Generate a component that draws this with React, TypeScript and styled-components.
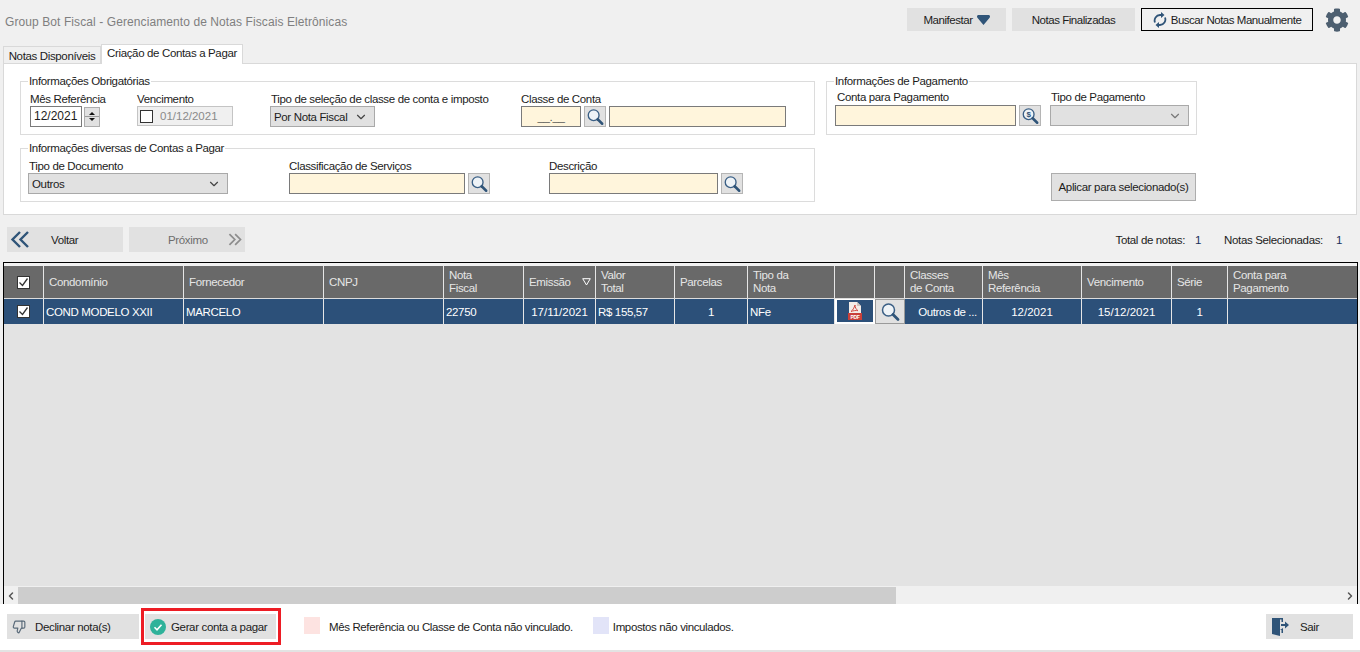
import styled, { createGlobalStyle } from "styled-components";
import { ChevronDown, ChevronLeft, ChevronRight, ThumbsDown } from "lucide-react";
import { FaCog } from "react-icons/fa";

const GlobalStyle = createGlobalStyle`
  html, body {
    margin: 0;
    padding: 0;
    background: #f0f0f0;
    overflow: hidden;
  }
  * {
    box-sizing: border-box;
  }
`;

const Page = styled.div`
  width: 1360px;
  height: 652px;
  display: flex;
  flex-direction: column;
  background: #f0f0f0;
  font-family: "Liberation Sans", Arial, sans-serif;
  font-size: 11.5px;
  letter-spacing: -0.35px;
  color: #1c1c1c;

  button {
    letter-spacing: inherit;
    white-space: nowrap;
  }
`;

const TopBar = styled.header`
  height: 44px;
  padding: 8px 11px 0 5px;
  display: flex;
  align-items: flex-start;
  gap: 6px;
`;

const AppTitle = styled.h1`
  margin: 0 auto 0 0;
  padding-top: 7px;
  font-size: 12px;
  font-weight: 400;
  letter-spacing: 0.09px;
  color: #7f7f7f;
`;

const TopButton = styled.button<{ $w: number; $focus?: boolean }>`
  width: ${(p) => p.$w}px;
  height: 23px;
  padding: 0;
  display: flex;
  align-items: center;
  justify-content: center;
  gap: 4px;
  background: ${(p) => (p.$focus ? "#f0f0f0" : "#e1e1e1")};
  border: ${(p) => (p.$focus ? "1px solid #000" : "none")};
  font: inherit;
  color: #1c1c1c;

  && {
    letter-spacing: -0.47px;
  }
`;

const GearWrap = styled.div`
  margin-left: 6px;
  height: 24px;
  color: #4d5f70;
`;

const TabStrip = styled.div`
  height: 20px;
  padding-left: 3px;
  display: flex;
  align-items: flex-end;
  position: relative;
  z-index: 1;
  margin-bottom: -1px;
`;

const Tab = styled.div<{ $active?: boolean }>`
  width: ${(p) => (p.$active ? 142 : 98)}px;
  height: ${(p) => (p.$active ? 20 : 18)}px;
  padding-top: ${(p) => (p.$active ? 2 : 3)}px;
  text-align: center;
  white-space: nowrap;
  background: ${(p) => (p.$active ? "#fff" : "#f0f0f0")};
  border: 1px solid #d9d9d9;
  border-bottom: ${(p) => (p.$active ? "none" : "1px solid #d9d9d9")};
`;

const Panel = styled.section`
  width: 1354px;
  height: 152px;
  margin-left: 3px;
  padding: 10px 0 0 16px;
  background: #fff;
  border: 1px solid #d9d9d9;
  display: grid;
  grid-template-columns: 795px 371px;
  grid-template-rows: 61px 61px;
  column-gap: 11px;
  row-gap: 6px;
`;

const Group = styled.fieldset<{ $compact?: boolean }>`
  margin: 0;
  min-width: 0;
  padding: ${(p) => (p.$compact ? 2 : 4)}px 0 0 8px;
  border: 1px solid #dcdcdc;
  display: flex;
  align-items: flex-start;

  label {
    height: ${(p) => (p.$compact ? 15 : 14)}px;
  }
`;

const GroupRow = styled.div`
  display: flex;
  align-items: flex-start;
`;

const Legend = styled.legend`
  margin-left: -1px;
  padding: 0 1px;
  line-height: 14px;
`;

const Field = styled.div<{ $w: number; $indent?: number }>`
  width: ${(p) => p.$w}px;
  margin-left: ${(p) => p.$indent ?? 0}px;
  display: flex;
  flex-direction: column;
`;

const Label = styled.label<{ $shift?: number }>`
  line-height: 14px;
  padding-left: ${(p) => p.$shift ?? 0}px;
  white-space: nowrap;
`;

const ControlRow = styled.div`
  display: flex;
  align-items: center;
  gap: 3px;
`;

const YellowInput = styled.div<{ $w: number }>`
  width: ${(p) => p.$w}px;
  height: 21px;
  background: #fff5dc;
  border: 1px solid #7a7a7a;
  text-align: center;
  line-height: 21px;
  color: #555;
`;

const DateText = styled.div`
  width: 52px;
  height: 21px;
  padding-left: 3px;
  line-height: 19px;
  font-size: 12px;
  letter-spacing: 0;
  color: #1c1c1c;
  background: #fff;
  border: 1px solid #7a7a7a;
`;

const Spinner = styled.div`
  width: 16px;
  height: 20px;
  margin-left: -1px;
  background: linear-gradient(#e1e1e1 8px, #9a9a9a 8px, #9a9a9a 9px, #e1e1e1 9px);
  border: 1px solid #adadad;
  display: flex;
  flex-direction: column;
  align-items: center;
  justify-content: center;
  gap: 3px;
  i {
    width: 0;
    height: 0;
    border-left: 3px solid transparent;
    border-right: 3px solid transparent;
  }
  i:first-child {
    border-bottom: 3px solid #111;
  }
  i:last-child {
    border-top: 3px solid #111;
  }
`;

const DisabledDate = styled.div`
  width: 96px;
  height: 20px;
  padding-left: 2px;
  display: flex;
  align-items: center;
  gap: 7px;
  letter-spacing: 0;
  background: #f0f0f0;
  border: 1px solid #c4c4c4;
  color: #8a8a8a;
`;

const CheckBox = styled.span`
  width: 13px;
  height: 13px;
  flex: none;
  background: #fff;
  border: 1px solid #333;
  display: inline-flex;
  align-items: center;
  justify-content: center;
`;

const Select = styled.div<{ $w: number; $empty?: boolean }>`
  width: ${(p) => p.$w}px;
  height: 21px;
  padding: 0 2px 0 3px;
  display: flex;
  align-items: center;
  justify-content: space-between;
  white-space: nowrap;
  background: #e1e1e1;
  border: 1px solid #a9a9a9;
  color: #1c1c1c;
  svg {
    color: ${(p) => (p.$empty ? "#777" : "#444")};
    margin-right: 4px;
  }
`;

const LookupButton = styled.button`
  width: 22px;
  height: 21px;
  padding: 0;
  display: flex;
  align-items: center;
  justify-content: center;
  background: #e1e1e1;
  border: 1px solid #b5b5b5;
`;

const ApplyCell = styled.div`
  display: flex;
  align-items: flex-end;
  justify-content: flex-end;
  padding: 0 1px 1px 0;
`;

const ApplyButton = styled.button`
  width: 145px;
  height: 28px;
  padding: 0;
  background: #e1e1e1;
  border: 1px solid #adadad;
  font: inherit;
  color: #1c1c1c;
`;

const NavRow = styled.div`
  height: 25px;
  margin-top: 12px;
  padding: 0 18px 0 7px;
  display: flex;
  align-items: center;
  gap: 6px;
`;

const NavButton = styled.button<{ $disabled?: boolean }>`
  width: 116px;
  height: 25px;
  padding: 0 3px;
  display: flex;
  align-items: center;
  background: #e1e1e1;
  border: none;
  font: inherit;
  color: ${(p) => (p.$disabled ? "#6d6d6d" : "#1c1c1c")};
`;

const NavLabel = styled.span<{ $left: number; $right?: number }>`
  margin-left: ${(p) => p.$left}px;
  margin-right: ${(p) => p.$right ?? 0}px;
`;

const Totals = styled.div`
  margin-left: auto;
  display: flex;
  gap: 23px;
`;

const TotalItem = styled.span<{ $gap: number }>`
  display: flex;
  gap: ${(p) => p.$gap}px;
  b {
    font-weight: 400;
    color: #17305c;
  }
`;

const GridFrame = styled.div`
  width: 1355px;
  height: 343px;
  margin: 10px 0 0 3px;
  padding-top: 3px;
  border: 1px solid #000;
  display: flex;
  flex-direction: column;
  background: #f0f0f0;
`;

const columns = "40px 140px 140px 120px 80px 72px 79px 73px 87px 40px 30px 78px 99px 90px 56px 127px";

const HeaderRow = styled.div`
  height: 33px;
  flex: none;
  display: grid;
  grid-template-columns: ${columns};
  background: #696969;
  border-bottom: 1px solid #dcdcdc;
`;

const HeaderCell = styled.div`
  padding-left: 5px;
  display: flex;
  align-items: center;
  justify-content: space-between;
  line-height: 13px;
  color: #e6e6e6;
  border-right: 1px solid #e6e6e6;
  white-space: pre-line;

  &:last-child {
    border-right: none;
  }
`;

const CheckCell = styled.div`
  display: flex;
  align-items: center;
  justify-content: center;
  border-right: 1px solid #e6e6e6;
`;

const FilterSlot = styled.span`
  margin-right: 4px;
  display: flex;
`;

const DataRow = styled.div`
  height: 25px;
  flex: none;
  display: grid;
  grid-template-columns: ${columns};
  background: #2c5079;
`;

const DataCell = styled.div<{ $center?: boolean; $wide?: boolean; $pad?: number }>`
  padding-left: ${(p) => p.$pad ?? (p.$center ? 0 : 2)}px;
  display: flex;
  align-items: center;
  justify-content: ${(p) => (p.$center ? "center" : "flex-start")};
  letter-spacing: ${(p) => (p.$wide ? "0" : "inherit")};
  color: #fff;
  border-right: 1px solid #e6e6e6;
  white-space: nowrap;

  &:last-child {
    border-right: none;
  }
`;

const PdfCell = styled.div`
  display: flex;
  align-items: center;
  justify-content: center;
  border: 2px solid #fff;
  border-top-width: 1px;
  background: #2c5079;
`;

const LensCell = styled.div`
  display: flex;
  align-items: center;
  justify-content: center;
  background: #e1e1e1;
  border: 1px solid #9a9a9a;
`;

const GridBody = styled.div`
  flex: 1;
  background: #e3e3e3;
`;

const ScrollBar = styled.div`
  height: 17px;
  flex: none;
  margin-top: 1px;
  display: flex;
  align-items: center;
  background: #f0f0f0;
  color: #555;
`;

const ScrollArrow = styled.div<{ $end?: boolean }>`
  width: 14px;
  margin-left: ${(p) => (p.$end ? "auto" : 0)};
  display: flex;
  justify-content: center;
`;

const ScrollThumb = styled.div`
  width: 878px;
  height: 17px;
  background: #cdcdcd;
`;

const Footer = styled.footer`
  flex: 1;
  margin-top: -1px;
  padding: 4px 7px 0 7px;
  height: 48px;
  display: flex;
  align-items: flex-start;
  background: #fff;
  border-bottom: 2px solid #e3e3e3;
`;

const FootButton = styled.button<{ $w: number; $gap: number }>`
  width: ${(p) => p.$w}px;
  height: 25px;
  padding: 0 0 0 5px;
  display: flex;
  align-items: center;
  gap: ${(p) => p.$gap}px;
  background: #e1e1e1;
  border: none;
  font: inherit;
  color: #1c1c1c;
`;

const Highlight = styled.div`
  margin: 0 0 0 2px;
  padding: 3px 2px 3px 1px;
  border: 3px solid #ed1c24;
`;

const DeclineSlot = styled.div`
  padding-top: 6px;
`;

const LegendSwatch = styled.span<{ $color: string }>`
  width: 16px;
  height: 17px;
  flex: none;
  background: ${(p) => p.$color};
`;

const LegendItem = styled.div<{ $left: number; $gap: number }>`
  margin-left: ${(p) => p.$left}px;
  margin-top: 9px;
  display: flex;
  align-items: center;
  gap: ${(p) => p.$gap}px;
`;

const LegendText = styled.span`
  margin-top: 2px;
  letter-spacing: -0.38px;
`;

const ExitSlot = styled.div`
  margin-left: auto;
  padding-top: 6px;
`;

const Lens = ({ size = 20, dollar = false }: { size?: number; dollar?: boolean }) => (
  <svg width={size} height={size} viewBox="0 0 20 20">
    <circle cx="8.5" cy="8" r="6" fill="#eef3f7" stroke="#3a5f85" strokeWidth="1.5" />
    {dollar && (
      <text x="8.5" y="11" fontSize="9" fontFamily="Liberation Sans" fontWeight="700" textAnchor="middle" fill="#2f5478">
        $
      </text>
    )}
    <path d="M13 12.5l5 5" stroke="#2f5478" strokeWidth="2.8" strokeLinecap="round" />
  </svg>
);

const Tick = () => (
  <svg width="11" height="11" viewBox="0 0 11 11">
    <path d="M1.5 5.5l3 3 5-7" fill="none" stroke="#333" strokeWidth="1.3" />
  </svg>
);

const SyncIcon = () => (
  <svg width="14" height="16" viewBox="0 0 14 16">
    <path d="M2 10.5A5.5 5.5 0 0 1 7 3h1.5M12 5.5A5.5 5.5 0 0 1 7 13H5.5" fill="none" stroke="#2f5478" strokeWidth="1.8" />
    <path d="M8 0l3.5 3L8 6zM6 10l-3.5 3L6 16z" fill="#2f5478" />
  </svg>
);

const PdfIcon = () => (
  <svg width="14" height="18" viewBox="0 0 14 18">
    <path d="M1 0h8l4 4v14H1z" fill="#f3ece8" />
    <path d="M9 0l4 4H9z" fill="#cfc4be" />
    <path d="M7 3c-1 3-2 5-4 6.500 2-.8 5-1.300 7-.8-2-1.200-3-3.500-3-5.700z" fill="none" stroke="#d24b43" strokeWidth="1" />
    <rect x="0" y="11" width="14" height="7" fill="#c9403a" />
    <text x="7" y="16.500" fontSize="5" fontFamily="Liberation Sans" fontWeight="700" textAnchor="middle" fill="#fff">
      PDF
    </text>
  </svg>
);

const OkIcon = () => (
  <svg width="16" height="16" viewBox="0 0 16 16">
    <circle cx="8" cy="8" r="8" fill="#2fb29a" />
    <path d="M4.500 8.300l2.500 2.500 4.500-5" fill="none" stroke="#fff" strokeWidth="1.600" />
  </svg>
);

const ExitIcon = () => (
  <svg width="18" height="20" viewBox="0 0 18 20">
    <path d="M1 1h8v18l-8-2z" fill="#2f5478" />
    <path d="M9 1h3v4h-1.500V2.500H9zM9 13h1.500v3H12v-5" fill="#2f5478" />
    <path d="M10 7h4V4.500L18 8l-4 3.500V9h-4z" fill="#2f5478" />
  </svg>
);

const DownTriangle = () => (
  <svg width="13" height="10" viewBox="0 0 13 10">
    <path d="M0 1.500C0 .5.800 0 1.500 0h10c.8 0 1.500.5 1.500 1.500 0 .5-.2 1-.6 1.400L6.500 10 .6 2.900C.2 2.500 0 2 0 1.500z" fill="#2f5478" />
  </svg>
);

const FilterMark = () => (
  <svg width="9" height="8" viewBox="0 0 9 8">
    <path d="M.7.7h7.600L4.500 7z" fill="none" stroke="#fff" strokeWidth="1" />
  </svg>
);

const DoubleChevron = ({ color, flip }: { color: string; flip?: boolean }) => (
  <svg width="20" height="17" viewBox="0 0 20 17">
    <path
      d={flip ? "M2 1l7.500 7.500L2 16M10 1l7.500 7.500L10 16" : "M18 1l-7.500 7.500L18 16M10 1L2.500 8.500 10 16"}
      fill="none"
      stroke={color}
      strokeWidth="2.4"
    />
  </svg>
);

const headers = [
  "Condomínio",
  "Fornecedor",
  "CNPJ",
  "Nota\nFiscal",
  "Emissão",
  "Valor\nTotal",
  "Parcelas",
  "Tipo da\nNota",
  "",
  "",
  "Classes\nde Conta",
  "Mês\nReferência",
  "Vencimento",
  "Série",
  "Conta para\nPagamento",
];

function App() {
  return (
    <Page>
      <GlobalStyle />
      <TopBar>
        <AppTitle>Group Bot Fiscal - Gerenciamento de Notas Fiscais Eletrônicas</AppTitle>
        <TopButton $w={99}>
          Manifestar <DownTriangle />
        </TopButton>
        <TopButton $w={123}>Notas Finalizadas</TopButton>
        <TopButton $w={172} $focus>
          <SyncIcon /> Buscar Notas Manualmente
        </TopButton>
        <GearWrap>
          <FaCog size={24} />
        </GearWrap>
      </TopBar>

      <TabStrip>
        <Tab>Notas Disponíveis</Tab>
        <Tab $active>Criação de Contas a Pagar</Tab>
      </TabStrip>

      <Panel>
        <Group>
          <Legend>Informações Obrigatórias</Legend>
          <GroupRow>
            <Field $w={107} $indent={1}>
              <Label>Mês Referência</Label>
              <ControlRow>
                <DateText>12/2021</DateText>
                <Spinner>
                  <i />
                  <i />
                </Spinner>
              </ControlRow>
            </Field>
            <Field $w={133}>
              <Label>Vencimento</Label>
              <DisabledDate>
                <CheckBox />
                01/12/2021
              </DisabledDate>
            </Field>
            <Field $w={251}>
              <Label $shift={1}>Tipo de seleção de classe de conta e imposto</Label>
              <Select $w={105}>
                Por Nota Fiscal <ChevronDown size={14} />
              </Select>
            </Field>
            <Field $w={265}>
              <Label>Classe de Conta</Label>
              <ControlRow>
                <YellowInput $w={60}>__.__</YellowInput>
                <LookupButton>
                  <Lens size={18} />
                </LookupButton>
                <YellowInput $w={177} />
              </ControlRow>
            </Field>
          </GroupRow>
        </Group>

        <Group $compact>
          <Legend>Informações de Pagamento</Legend>
          <GroupRow>
            <Field $w={215}>
              <Label $shift={2}>Conta para Pagamento</Label>
              <ControlRow>
                <YellowInput $w={181} />
                <LookupButton>
                  <Lens size={18} dollar />
                </LookupButton>
              </ControlRow>
            </Field>
            <Field $w={140}>
              <Label $shift={1}>Tipo de Pagamento</Label>
              <Select $w={139} $empty>
                <span />
                <ChevronDown size={14} />
              </Select>
            </Field>
          </GroupRow>
        </Group>

        <Group>
          <Legend>Informações diversas de Contas a Pagar</Legend>
          <GroupRow>
            <Field $w={261} $indent={-1}>
              <Label $shift={1}>Tipo de Documento</Label>
              <Select $w={200}>
                Outros <ChevronDown size={14} />
              </Select>
            </Field>
            <Field $w={260}>
              <Label>Classificação de Serviços</Label>
              <ControlRow>
                <YellowInput $w={176} />
                <LookupButton>
                  <Lens size={18} />
                </LookupButton>
              </ControlRow>
            </Field>
            <Field $w={200}>
              <Label>Descrição</Label>
              <ControlRow>
                <YellowInput $w={169} />
                <LookupButton>
                  <Lens size={18} />
                </LookupButton>
              </ControlRow>
            </Field>
          </GroupRow>
        </Group>

        <ApplyCell>
          <ApplyButton>Aplicar para selecionado(s)</ApplyButton>
        </ApplyCell>
      </Panel>

      <NavRow>
        <NavButton>
          <DoubleChevron color="#2f5478" />
          <NavLabel $left={21}>Voltar</NavLabel>
        </NavButton>
        <NavButton $disabled>
          <NavLabel $left={36} $right={20}>
            Próximo
          </NavLabel>
          <DoubleChevron color="#8c8c8c" flip />
        </NavButton>
        <Totals>
          <TotalItem $gap={10}>
            Total de notas: <b>1</b>
          </TotalItem>
          <TotalItem $gap={13}>
            Notas Selecionadas: <b>1</b>
          </TotalItem>
        </Totals>
      </NavRow>

      <GridFrame>
        <HeaderRow>
          <CheckCell>
            <CheckBox>
              <Tick />
            </CheckBox>
          </CheckCell>
          {headers.map((h, i) => (
            <HeaderCell key={i}>
              <span>{h}</span>
              {h === "Emissão" && (
                <FilterSlot>
                  <FilterMark />
                </FilterSlot>
              )}
            </HeaderCell>
          ))}
        </HeaderRow>
        <DataRow>
          <CheckCell>
            <CheckBox>
              <Tick />
            </CheckBox>
          </CheckCell>
          <DataCell>COND MODELO XXII</DataCell>
          <DataCell>MARCELO</DataCell>
          <DataCell />
          <DataCell>22750</DataCell>
          <DataCell $center $wide>
            17/11/2021
          </DataCell>
          <DataCell>R$ 155,57</DataCell>
          <DataCell $center>1</DataCell>
          <DataCell>NFe</DataCell>
          <PdfCell>
            <PdfIcon />
          </PdfCell>
          <LensCell>
            <Lens size={20} />
          </LensCell>
          <DataCell $center $pad={8}>
            Outros de ...
          </DataCell>
          <DataCell $center $wide>
            12/2021
          </DataCell>
          <DataCell $center $wide>
            15/12/2021
          </DataCell>
          <DataCell $center>1</DataCell>
          <DataCell />
        </DataRow>
        <GridBody />
        <ScrollBar>
          <ScrollArrow>
            <ChevronLeft size={12} strokeWidth={3} />
          </ScrollArrow>
          <ScrollThumb />
          <ScrollArrow $end>
            <ChevronRight size={12} strokeWidth={3} />
          </ScrollArrow>
        </ScrollBar>
      </GridFrame>

      <Footer>
        <DeclineSlot>
          <FootButton $w={132} $gap={9}>
            <ThumbsDown size={14} color="#5a6b7a" />
            Declinar nota(s)
          </FootButton>
        </DeclineSlot>
        <Highlight>
          <FootButton $w={131} $gap={5}>
            <OkIcon />
            Gerar conta a pagar
          </FootButton>
        </Highlight>
        <LegendItem $left={23} $gap={9}>
          <LegendSwatch $color="#fde3e1" />
          <LegendText>Mês Referência ou Classe de Conta não vinculado.</LegendText>
        </LegendItem>
        <LegendItem $left={20} $gap={4}>
          <LegendSwatch $color="#e2e4f8" />
          <LegendText>Impostos não vinculados.</LegendText>
        </LegendItem>
        <ExitSlot>
          <FootButton $w={87} $gap={11}>
            <ExitIcon />
            Sair
          </FootButton>
        </ExitSlot>
      </Footer>
    </Page>
  );
}

export default App;
